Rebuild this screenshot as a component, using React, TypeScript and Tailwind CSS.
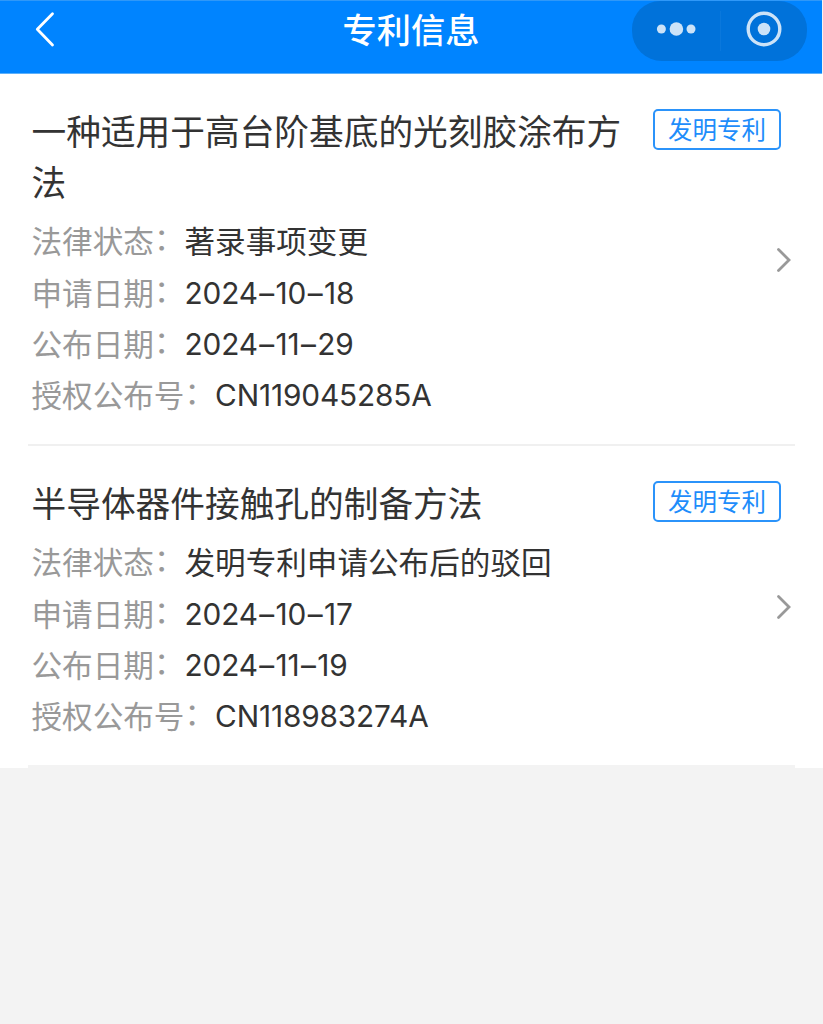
interface Field {
  label: string;
  value: string;
  latin?: boolean;
}

interface Patent {
  title: string;
  type: string;
  fields: Field[];
}

const patents: Patent[] = [
  {
    title: '一种适用于高台阶基底的光刻胶涂布方法',
    type: '发明专利',
    fields: [
      { label: '法律状态', value: '著录事项变更' },
      { label: '申请日期', value: '2024–10–18', latin: true },
      { label: '公布日期', value: '2024–11–29', latin: true },
      { label: '授权公布号', value: 'CN119045285A', latin: true },
    ],
  },
  {
    title: '半导体器件接触孔的制备方法',
    type: '发明专利',
    fields: [
      { label: '法律状态', value: '发明专利申请公布后的驳回' },
      { label: '申请日期', value: '2024–10–17', latin: true },
      { label: '公布日期', value: '2024–11–19', latin: true },
      { label: '授权公布号', value: 'CN118983274A', latin: true },
    ],
  },
];

function Header() {
  return (
    <header className="grid h-[74px] w-[822px] grid-cols-3 items-start border-b border-t border-b-[#5cb0fb] border-t-[#2f98f8] bg-[#0084ff]">
      <button className="ml-[34px] mt-[9px] w-fit" aria-label="返回">
        <svg width="22" height="38" viewBox="0 0 22 38" fill="none" stroke="#fff" strokeWidth="2.8" strokeLinecap="round" strokeLinejoin="round">
          <path d="M18.5 3.7 3.3 19.2 18.5 35" />
        </svg>
      </button>
      <h1 className="text-center text-[34.2px] font-medium leading-[60px] text-white">专利信息</h1>
      {/* Mini program capsule */}
      <div className="mr-[15px] flex h-[60px] w-[175px] items-center justify-self-end rounded-b-[30px] rounded-t-[28px] bg-[#0072da]">
        <svg className="w-[88px]" height="40" viewBox="0 0 88 40" fill="#cce3f8">
          <circle cx="29.4" cy="18" r="4.5" />
          <circle cx="44.4" cy="18" r="6.8" />
          <circle cx="59" cy="18" r="4.5" />
        </svg>
        <span className="h-10 w-px bg-[#0a78dc]" />
        <svg width="86" height="40" viewBox="0 0 86 40">
          <circle cx="43" cy="18" r="15.8" fill="none" stroke="#cce3f8" strokeWidth="3.4" />
          <circle cx="43" cy="18" r="6.3" fill="#cce3f8" />
        </svg>
      </div>
    </header>
  );
}

function LatinValue({ value }: { value: string }) {
  return (
    <dd className="text-[29.8px] tracking-[-0.15px] text-[#333]">
      {value.split('–').map((part, index) => (
        <span key={index}>
          {index > 0 && <span className="px-[1.5px]">–</span>}
          {part}
        </span>
      ))}
    </dd>
  );
}

function PatentItem({ patent }: { patent: Patent }) {
  return (
    <li className="relative mx-7 border-b-2 border-[#f0f0f0] pb-[23px] pl-[3.5px] pt-8 last:border-b-4 last:border-[#f3f3f3]">
      <div className="flex items-start justify-between">
        <h2 className="mt-px w-[600px] text-[34.7px] leading-[51.2px] text-[#333]">{patent.title}</h2>
        <span className="mr-[14px] mt-[3px] flex h-[41px] w-[128px] items-center justify-center rounded-[5px] border-2 border-[#2b93fa] pt-px text-[24.5px] leading-none text-[#1e8dfb]">
          {patent.type}
        </span>
      </div>
      <dl className="mt-[7px]">
        {patent.fields.map((field) => (
          <div key={field.label} className="flex h-[51.2px] items-center text-[30.6px] leading-[51.2px]">
            <dt className="flex text-[#999]">
              {field.label}
              <span className="-translate-y-[3px]">：</span>
            </dt>
            {field.latin ? <LatinValue value={field.value} /> : <dd className="text-[#333]">{field.value}</dd>}
          </div>
        ))}
      </dl>
      <svg className="absolute right-[2px] top-1/2 -translate-y-[13px]" width="18" height="28" viewBox="0 0 18 28" fill="none" stroke="#999" strokeWidth="2.8" strokeLinecap="round">
        <path d="M3.5 3.5 14 14 3.5 24.5" />
      </svg>
    </li>
  );
}

export default function App() {
  return (
    <div className="min-h-screen bg-[#f3f3f3] font-['Inter','Noto_Sans_CJK_SC',sans-serif]" lang="zh-CN">
      <Header />
      <ul className="h-[694px] overflow-hidden bg-white">
        {patents.map((patent) => (
          <PatentItem key={patent.title} patent={patent} />
        ))}
      </ul>
    </div>
  );
}
